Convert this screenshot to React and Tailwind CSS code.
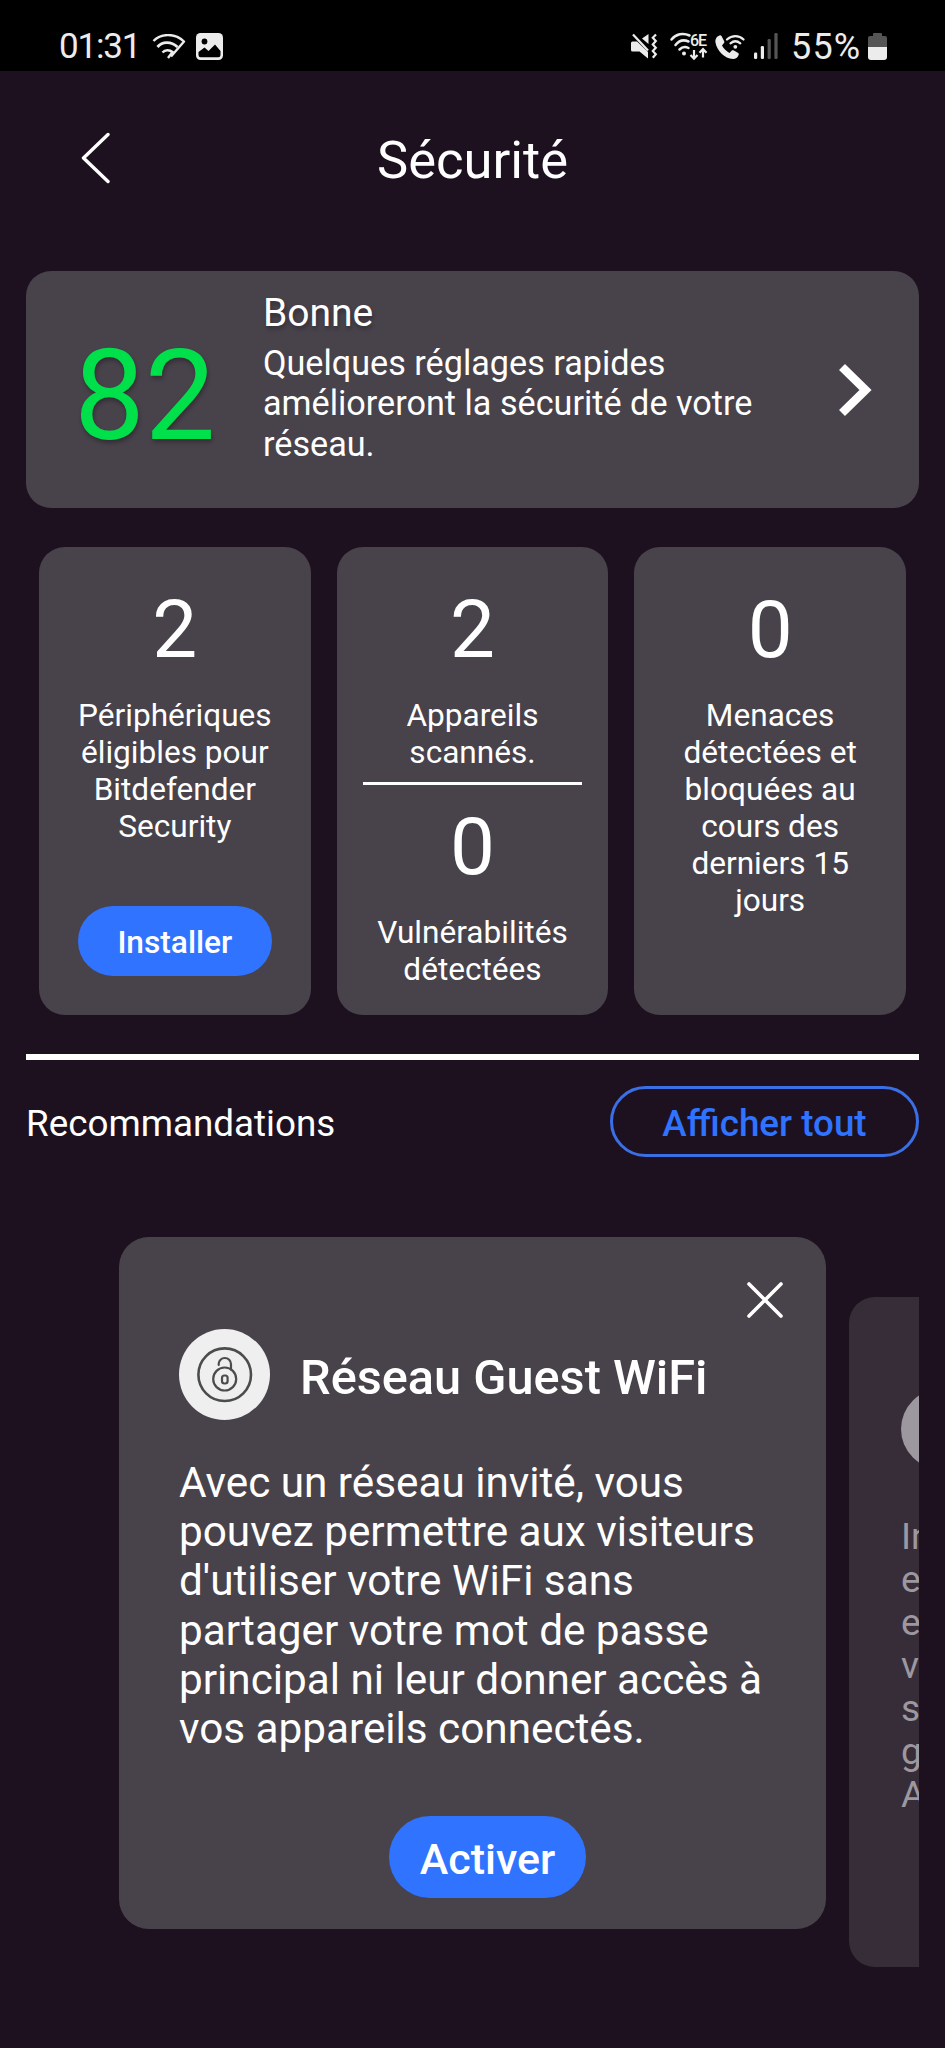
const StatusBar = () => (
  <div className="flex h-[71px] items-start bg-black pt-[33px] pr-[58px] pl-[59px] text-[#ececec]">
    <span className="w-[93px] text-[35px] leading-[28px] tracking-[-1.2px]">01:31</span>

    {/* Slanted wifi logo */}
    <svg className="mt-px h-[26px] w-[34px]" viewBox="0 0 34 26" fill="none">
      <path d="M1.500 7C8 0 22-2 32 7.500L19 22.500" stroke="currentColor" strokeWidth="2.400" strokeLinejoin="round" />
      <path d="M5.500 13C10 7.500 19 7 25.500 13" stroke="currentColor" strokeWidth="2.800" />
      <path d="M10.500 18.500C13 15.500 17.500 15.500 20.500 18L16 24" stroke="currentColor" strokeWidth="2.400" />
    </svg>

    <svg className="ml-[10px] h-[27px] w-[27px]" viewBox="0 0 27 27">
      <rect width="27" height="27" rx="4.500" fill="currentColor" />
      <circle cx="8.500" cy="8.500" r="2.900" fill="#000" />
      <path d="M2.500 19l6-4.500 4 3.500 6.500-6.500 5.500 6.500v4a2.200 2.200 0 0 1-2.200 2.200H4.700A2.200 2.200 0 0 1 2.500 22z" fill="#000" />
    </svg>

    {/* Vibration / muted sound */}
    <svg className="ml-auto h-[27px] w-[27px]" viewBox="0 0 27 27" fill="none">
      <path d="M1.500 8.500H6L17 19v6.500L8.500 18.500H1.500A1.500 1.500 0 0 1 0 17v-7a1.500 1.500 0 0 1 1.500-1.500z" fill="currentColor" />
      <path d="M17.500 1v10L11 5.500z" fill="currentColor" />
      <path d="M2 1.500L17 17.500" stroke="currentColor" strokeWidth="2.200" />
      <path d="M25 1.500l-3.200 3.300 3 3.300-3 3.300 3 3.300-3 3.300 3 3.300-3 3.500" stroke="currentColor" strokeWidth="2.200" />
    </svg>

    {/* Wifi 6E with traffic arrows */}
    <svg className="ml-[12px] h-[28px] w-[38px] overflow-visible" viewBox="0 0 38 28" fill="none">
      <path d="M1.500 6.500C6 1 13-.500 19.500 2.500M5.500 12C9 7.500 14 6.500 18.500 8.500M9.500 16.500c2.500-2.500 6-3 9-1.500" stroke="currentColor" strokeWidth="2.500" strokeLinecap="round" />
      <circle cx="14" cy="20.500" r="2" fill="currentColor" />
      <path d="M24 17v8.500m-3.500-3.500l3.500 3.700 3.500-3.700M33 24.500V16m-3.500 3.700l3.500-3.700 3.500 3.700" stroke="currentColor" strokeWidth="2.200" />
      <text x="20" y="12.500" fontSize="16" fontWeight="500" fill="currentColor" textLength="17">6E</text>
    </svg>

    {/* Wifi calling */}
    <svg className="mt-px ml-[7px] h-[27px] w-[30px]" viewBox="0 0 30 27" fill="none">
      <path d="M4.500 1.500c-3 1-4.500 4-4 7C2 17 9.500 24.500 18 25c2.500 0 5-1.500 5.800-4.500.1-.6-.1-1.100-.6-1.500l-4.700-2.700c-.6-.3-1.200-.2-1.700.3L14.500 19C11.500 17.500 8.500 14.500 7 11.500l2-2.500c.4-.5.5-1.100.2-1.700L6.500 2C6 1.400 5.300 1.200 4.500 1.500z" fill="currentColor" />
      <path d="M12 5.500c5-4.500 12-4.500 16.500 0M15.500 9.300c3-2.500 6.800-2.500 9.800 0" stroke="currentColor" strokeWidth="2.200" strokeLinecap="round" />
      <circle cx="20.300" cy="12.800" r="1.900" fill="currentColor" />
    </svg>

    <svg className="ml-[9px] h-[27px] w-[24px]" viewBox="0 0 24 27">
      <rect x="0" y="19.500" width="3.200" height="6.500" rx="1.200" fill="currentColor" />
      <rect x="6.800" y="13" width="3.200" height="13" rx="1.200" fill="currentColor" />
      <rect x="13.600" y="6" width="3.200" height="20" rx="1.200" fill="#555" />
      <rect x="20.400" y="0" width="3.200" height="26" rx="1.200" fill="#555" />
    </svg>

    <span className="w-[87px] pl-[13px] text-[36px] leading-[28px] tracking-[1.2px]">55%</span>

    <svg className="ml-[3px] h-[27px] w-[19px]" viewBox="0 0 19 27">
      <path d="M6 0h7a1 1 0 0 1 1 1v2h3a2 2 0 0 1 2 2v9H0V5a2 2 0 0 1 2-2h3V1a1 1 0 0 1 1-1z" fill="#555" />
      <path d="M0 14h19v10a3 3 0 0 1-3 3H3a3 3 0 0 1-3-3z" fill="currentColor" />
    </svg>
  </div>
);

const Header = () => (
  <header className="grid h-[200px] grid-cols-[1fr_auto_1fr] items-center pb-[22px]">
    <button className="mb-[4px] ml-[80px] w-[30px]">
      <svg className="h-[52px] w-[30px]" viewBox="0 0 30 52" fill="none">
        <path d="M28 2.500L3.500 26L28 49.500" stroke="#fff" strokeWidth="3.400" strokeLinecap="round" strokeLinejoin="round" />
      </svg>
    </button>
    <h1 className="text-[52.500px] leading-[58px]">Sécurité</h1>
  </header>
);

const ScoreCard = () => (
  <section className="flex h-[237px] rounded-[25px] bg-[#48424b] pl-[48px] [text-shadow:1px_3px_4px_rgba(0,0,0,0.3)]">
    <div className="w-[189px] pt-[62px] text-[126px] leading-[126px] text-[#00e04b]">
      82
    </div>
    <div className="w-[530px] pt-[19px]">
      <h2 className="text-[39px] leading-[46px]">Bonne</h2>
      <p className="mt-[7px] text-[34.200px] leading-[40.300px] [text-shadow:none]">
        Quelques réglages rapides amélioreront la sécurité de votre réseau.
      </p>
    </div>
    <svg className="mt-[92px] ml-[45px] h-[54px] w-[34px]" viewBox="0 0 34 54" fill="none">
      <path d="M4 4L27.500 27L4 50" stroke="#fff" strokeWidth="8.500" />
    </svg>
  </section>
);

const Stat = ({ value, label }) => (
  <>
    <div className="text-[80px] leading-[80px]">{value}</div>
    <p className="mt-[28px] text-[31.600px] leading-[36.900px]">{label}</p>
  </>
);

const StatCard = ({ children }) => (
  <div className="flex flex-col rounded-[26px] bg-[#48424b] px-[26px] pt-[43px] text-center">
    {children}
  </div>
);

const Stats = () => (
  <section className="mx-[13px] mt-[39px] grid h-[468px] grid-cols-3 gap-[26px]">
    <StatCard>
      <Stat value="2" label="Périphériques éligibles pour Bitdefender Security" />
      <button className="mx-[13px] mt-auto mb-[39px] h-[70px] rounded-full bg-[#2f73ff] pt-[4px] text-[31.700px] font-medium">
        Installer
      </button>
    </StatCard>
    <StatCard>
      <Stat value="2" label="Appareils scannés." />
      <hr className="mt-[10px] mb-[22px] border-t-[3px] border-white" />
      <Stat value="0" label="Vulnérabilités détectées" />
    </StatCard>
    <StatCard>
      <Stat value="0" label="Menaces détectées et bloquées au cours des derniers 15 jours" />
    </StatCard>
  </section>
);

const CloseIcon = () => (
  <svg className="h-[36px] w-[36px]" viewBox="0 0 36 36" fill="none">
    <path d="M2 2l32 32M34 2L2 34" stroke="#fff" strokeWidth="3.600" strokeLinecap="round" />
  </svg>
);

const GuestLockIcon = () => (
  <svg className="h-[91px] w-[91px]" viewBox="0 0 91 91" fill="none">
    <circle cx="45.500" cy="45.500" r="45.500" fill="#efefef" />
    <g stroke="#4c4c4c">
      <circle cx="45.700" cy="45.700" r="26.300" strokeWidth="2.600" />
      <circle cx="45.700" cy="50" r="11.500" strokeWidth="2.200" />
      <path d="M39.700 36v-1.200a6 6 0 0 1 6-5.800 6.200 6.200 0 0 1 6.300 6.300v5.200" strokeWidth="2.200" strokeLinecap="round" />
      <rect x="43" y="46.500" width="5.600" height="8" rx="2.400" strokeWidth="2.200" />
    </g>
  </svg>
);

// First letters of each line, the rest runs past the edge of the carousel
const nextCardLines = ["In", "e", "e", "v", "s", "g", "A"];

const Recommendations = () => (
  <section className="mt-[80px] flex overflow-hidden pl-[93px]">
    <article className="h-[692px] w-[707px] shrink-0 rounded-[30px] bg-[#48424b] pt-[45px] pl-[60px]">
      <div className="flex justify-end pr-[43px]">
        <CloseIcon />
      </div>
      <div className="mt-[11px] flex items-center gap-[30px]">
        <GuestLockIcon />
        <h3 className="pt-[6px] text-[48.700px] font-medium whitespace-nowrap">Réseau Guest WiFi</h3>
      </div>
      <p className="mt-[38px] w-[592px] text-[42.300px] leading-[49.200px] tracking-[-0.02px]">
        Avec un réseau invité, vous pouvez permettre aux visiteurs d'utiliser
        votre WiFi sans partager votre mot de passe principal ni leur donner
        accès à vos appareils connectés.
      </p>
      <button className="mt-[63px] ml-[210px] h-[82px] w-[197px] rounded-full bg-[#2f73ff] pt-[4px] text-[43px] font-medium">
        Activer
      </button>
    </article>

    <article className="mt-[60px] ml-[23px] h-[670px] w-[618px] shrink-0 rounded-[26px] bg-[#362d39] pt-[92px] pl-[52px] text-[#9d98a0]">
      <div className="h-[80px] w-[80px] rounded-full bg-[#9d98a0]" />
      <div className="mt-[46px] text-[37px] leading-[43px]">
        {nextCardLines.map((line, i) => (
          <div key={i}>{line}</div>
        ))}
      </div>
    </article>
  </section>
);

export default function App() {
  return (
    <div className="h-[2048px] w-[945px] overflow-hidden bg-[#1d1120] font-['Roboto',sans-serif] text-white">
      <StatusBar />
      <Header />
      <main className="px-[26px]">
        <ScoreCard />
        <Stats />
        <hr className="mt-[39px] border-t-[6px] border-white" />
        <div className="mt-[26px] flex items-center justify-between">
          <h2 className="pt-[5px] text-[36.800px]">Recommandations</h2>
          <button className="h-[71px] w-[309px] rounded-full border-3 border-[#3a6fe6] pt-[4px] text-[36.800px] font-medium text-[#2f73ff]">
            Afficher tout
          </button>
        </div>
        <Recommendations />
      </main>
    </div>
  );
}
